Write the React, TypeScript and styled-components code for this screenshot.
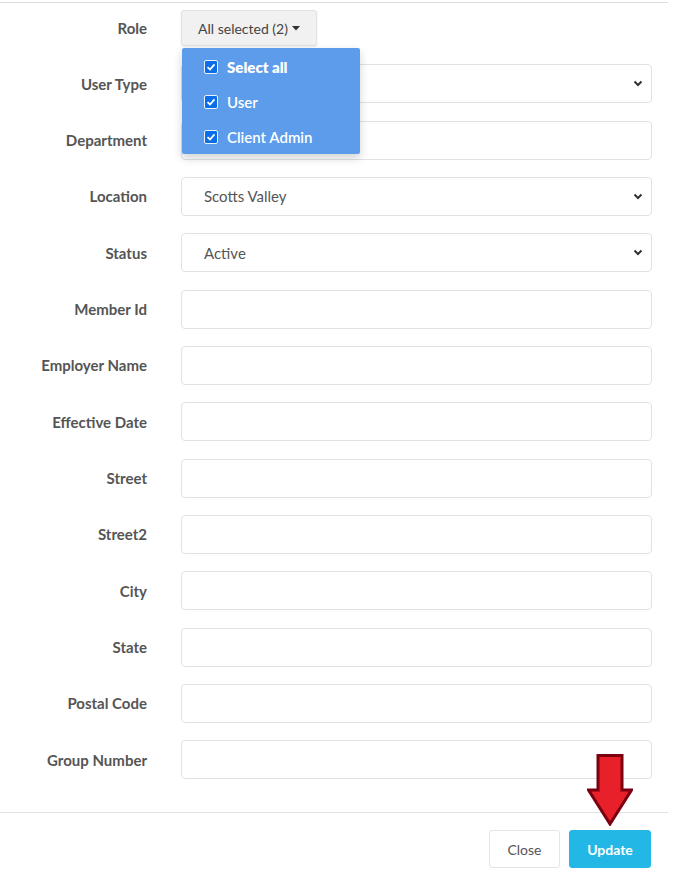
import React from "react";
import styled, { createGlobalStyle } from "styled-components";

const Global = createGlobalStyle`
  html, body { margin: 0; padding: 0; background: #fff; }
  body { font-family: "Lato", "Noto Sans", sans-serif; color: #555; }
`;

const Page = styled.div`
  width: 668px;
  border-top: 1px solid #dcdcdc;
  margin-top: 2px;
`;

const Body = styled.div`
  display: flex;
  flex-direction: column;
  gap: 17.33px;
  padding: 6px 16px 33px 0;
  position: relative;
`;

const Row = styled.div<{ $h?: number }>`
  display: grid;
  grid-template-columns: 147px 1fr;
  column-gap: 34px;
  align-items: center;
  height: ${(p) => p.$h ?? 39}px;
`;

const Label = styled.label`
  text-align: right;
  font-weight: 700;
  font-size: 15px;
  color: #555;
`;

const Field = styled.div`
  height: 39px;
  box-sizing: border-box;
  border: 1px solid #dfe3e8;
  border-radius: 4px;
  background: #fff;
  display: flex;
  align-items: center;
  justify-content: space-between;
  padding: 0 8px 0 22px;
  font-size: 15px;
  color: #555;
`;

const RoleWrap = styled.div`
  position: relative;
  align-self: start;
  margin-top: 1px;
`;

const RoleButton = styled.button`
  height: 36px;
  width: 136px;
  border: 1px solid #e2e2e2;
  border-radius: 3px;
  background: #f1f1f1;
  box-shadow: 0 1px 2px rgba(0, 0, 0, 0.08);
  font-family: inherit;
  font-size: 14px;
  color: #444;
  display: flex;
  align-items: center;
  justify-content: center;
  gap: 4px;
  padding: 0;
`;

const Menu = styled.div`
  position: absolute;
  left: 1px;
  top: 38px;
  width: 178px;
  height: 106px;
  background: #5c9cea;
  border-radius: 2px;
  box-shadow: 0 4px 10px rgba(0, 0, 0, 0.18);
  z-index: 5;
  display: flex;
  flex-direction: column;
  padding-top: 2px;
  box-sizing: border-box;
`;

const MenuItem = styled.div<{ $bold?: boolean }>`
  height: 35.5px;
  display: flex;
  align-items: center;
  gap: 9px;
  padding-left: 22px;
  color: #fff;
  font-size: 15px;
  font-weight: ${(p) => (p.$bold ? 800 : 600)};
`;

const Box = styled.span`
  width: 14px;
  height: 14px;
  border-radius: 2px;
  background: #0b6ee8;
  border: 1px solid #e9f1fc;
  box-sizing: border-box;
  display: flex;
  align-items: center;
  justify-content: center;
`;

const Footer = styled.div`
  border-top: 1px solid #e2e2e2;
  display: flex;
  justify-content: flex-end;
  gap: 9px;
  padding: 17px 17px 6px 0;
`;

const Btn = styled.button<{ $primary?: boolean }>`
  height: 38px;
  box-sizing: border-box;
  border-radius: 3px;
  font-family: inherit;
  font-size: 14px;
  padding: 0;
  width: ${(p) => (p.$primary ? 82 : 71)}px;
  border: 1px solid ${(p) => (p.$primary ? "#23b7e5" : "#e4e4e4")};
  background: ${(p) => (p.$primary ? "#23b7e5" : "#fff")};
  color: ${(p) => (p.$primary ? "#fff" : "#555")};
  font-weight: ${(p) => (p.$primary ? 700 : 400)};
`;

const Arrow = styled.svg`
  position: absolute;
  right: 35px;
  bottom: -14px;
  z-index: 3;
`;

const Check = () => (
  <svg width="10" height="10" viewBox="0 0 10 10">
    <path d="M1.5 5.2 L4 7.5 L8.5 2.3" fill="none" stroke="#fff" strokeWidth="1.8" />
  </svg>
);

const Chevron = () => (
  <svg width="10" height="7" viewBox="0 0 10 7">
    <path d="M1.5 1.5 L5 5 L8.5 1.5" fill="none" stroke="#333" strokeWidth="2" />
  </svg>
);

const Caret = () => (
  <svg width="8" height="5" viewBox="0 0 8 5">
    <path d="M0 0 L8 0 L4 4.5 Z" fill="#333" />
  </svg>
);

type F = { label: string; value?: string; select?: boolean };

const fields: F[] = [
  { label: "User Type", select: true },
  { label: "Department" },
  { label: "Location", value: "Scotts Valley", select: true },
  { label: "Status", value: "Active", select: true },
  { label: "Member Id" },
  { label: "Employer Name" },
  { label: "Effective Date" },
  { label: "Street" },
  { label: "Street2" },
  { label: "City" },
  { label: "State" },
  { label: "Postal Code" },
  { label: "Group Number" },
];

export default function App() {
  return (
    <>
      <Global />
      <Page>
        <Body>
          <Row $h={38}>
            <Label>Role</Label>
            <RoleWrap>
              <RoleButton>
                All selected (2) <Caret />
              </RoleButton>
              <Menu>
                <MenuItem $bold>
                  <Box><Check /></Box>Select all
                </MenuItem>
                <MenuItem>
                  <Box><Check /></Box>User
                </MenuItem>
                <MenuItem>
                  <Box><Check /></Box>Client Admin
                </MenuItem>
              </Menu>
            </RoleWrap>
          </Row>
          {fields.map((f) => (
            <Row key={f.label}>
              <Label>{f.label}</Label>
              <Field>
                <span>{f.value ?? ""}</span>
                {f.select && <Chevron />}
              </Field>
            </Row>
          ))}
          <Arrow width="46" height="72" viewBox="0 0 46 72">
            <path
              d="M11 1.5 H35 V36 H44.5 L23 70 L1.5 36 H11 Z"
              fill="#e8202a"
              stroke="#7d0010"
              strokeWidth="3"
              strokeLinejoin="miter"
            />
          </Arrow>
        </Body>
        <Footer>
          <Btn>Close</Btn>
          <Btn $primary>Update</Btn>
        </Footer>
      </Page>
    </>
  );
}
